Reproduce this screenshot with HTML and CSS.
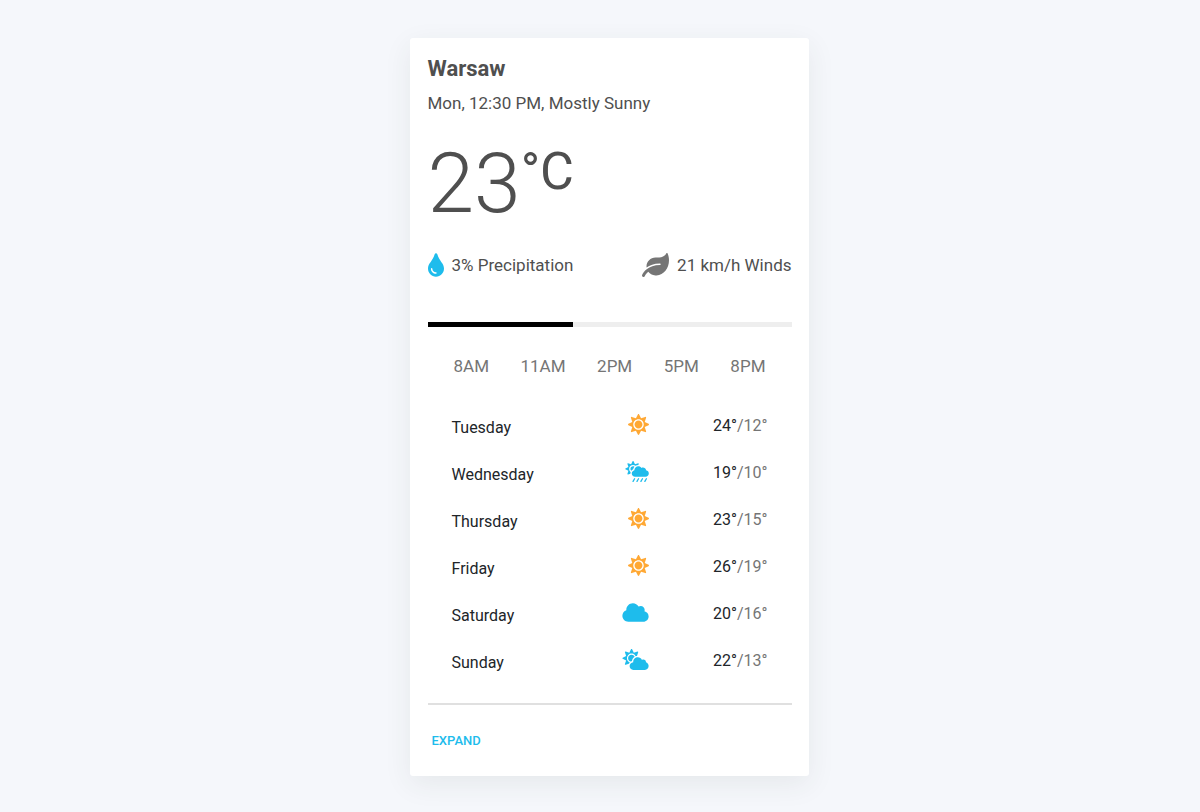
FILE: index.html
```html
<!DOCTYPE html>
<html lang="en">
<head>
<meta charset="utf-8">
<meta name="viewport" content="width=device-width, initial-scale=1">
<title>Warsaw weather</title>
<link rel="stylesheet" href="styles.css">
</head>
<body>
<svg class="sprite" aria-hidden="true">
  <symbol id="drop" viewBox="0 0 352 512"><path d="M205.22 22.09c-7.94-28.78-49.44-30.12-58.44 0C100.01 179.85 0 222.72 0 333.91 0 432.35 78.72 512 176 512s176-79.65 176-178.09c0-111.75-99.79-153.34-146.78-311.82zM176 448c-61.75 0-112-50.25-112-112 0-8.84 7.16-16 16-16s16 7.16 16 16c0 44.11 35.89 80 80 80 8.84 0 16 7.16 16 16s-7.16 16-16 16z"/></symbol>
  <symbol id="leaf" viewBox="0 0 576 512"><path d="M546.2 9.7c-5.6-12.5-21.6-13-28.3-1.2C486.9 62.4 431.4 96 368 96h-80C182 96 96 182 96 288c0 7 .8 13.7 1.5 20.5C161.3 262.8 253.4 224 384 224c8.8 0 16 7.2 16 16s-7.2 16-16 16C132.6 256 26 410.1 2.4 468c-6.6 16.3 1.2 34.9 17.5 41.6 16.4 6.8 35-1.1 41.8-17.3 1.5-3.6 20.9-47.9 71.9-90.6 32.4 43.9 94 85.8 174.9 77.2C465.5 467.5 576 326.7 576 154.3c0-50.2-10.8-102.2-29.8-144.6z"/></symbol>
  <symbol id="sun" viewBox="0 0 512 512"><path d="M256 160c-52.9 0-96 43.1-96 96s43.1 96 96 96 96-43.1 96-96-43.1-96-96-96zm246.4 80.5l-94.7-47.3 33.5-100.4c4.5-13.6-8.4-26.5-21.9-21.9l-100.4 33.5-47.4-94.8c-6.4-12.8-24.6-12.8-31 0l-47.3 94.7L92.7 70.8c-13.6-4.5-26.5 8.4-21.9 21.9l33.5 100.4-94.7 47.4c-12.8 6.4-12.8 24.6 0 31l94.7 47.3-33.5 100.5c-4.5 13.6 8.4 26.5 21.9 21.9l100.4-33.5 47.3 94.7c6.4 12.8 24.6 12.8 31 0l47.3-94.7 100.4 33.5c13.6 4.5 26.5-8.4 21.9-21.9l-33.5-100.4 94.7-47.3c13-6.5 13-24.7.2-31.1zm-155.9 106c-49.9 49.9-131.1 49.9-181 0-49.9-49.9-49.9-131.1 0-181 49.9-49.9 131.1-49.9 181 0 49.9 49.9 49.9 131.1 0 181z"/></symbol>
  <symbol id="cloud" viewBox="0 0 640 512"><path d="M537.6 226.6c4.1-10.7 6.4-22.4 6.4-34.6 0-53-43-96-96-96-19.7 0-38.1 6-53.3 16.2C367 64.2 315.3 32 256 32c-88.4 0-160 71.6-160 160 0 2.7.1 5.4.2 8.1C40.2 219.8 0 273.2 0 336c0 79.5 64.5 144 144 144h368c70.7 0 128-57.3 128-128 0-61.9-44-113.6-102.4-125.4z"/></symbol>
  <symbol id="cloud-sun" viewBox="0 0 640 512"><path d="M575.2 325.7c.2-1.9.8-3.7.8-5.6 0-35.3-28.7-64-64-64-12.6 0-24.2 3.8-34.1 10-17.6-38.8-56.5-66-101.9-66-61.8 0-112 50.1-112 112 0 3 .7 5.8.9 8.7-49.6 3.7-88.9 44.7-88.9 95.3 0 53 43 96 96 96h272c53 0 96-43 96-96 0-42.1-27.2-77.4-64.8-90.4zm-430.4-22.6c-43.7-43.7-43.7-114.7 0-158.3 43.7-43.7 114.7-43.7 158.4 0 9.7 9.7 16.9 20.9 22.3 32.7 9.8-3.7 20.1-6 30.7-7.5L386 81.1c4-11.9-7.3-23.1-19.2-19.2L279 91.2 237.5 8.4C232-2.8 216-2.8 210.4 8.4L169 91.2 81.1 61.9C69.3 58 58 69.3 61.9 81.1l29.3 87.8-82.8 41.5c-11.2 5.6-11.2 21.5 0 27.1l82.8 41.4-29.3 87.8c-4 11.9 7.3 23.1 19.2 19.2l76.1-25.3c6.1-12.4 14-23.7 23.6-33.5-13.1-5.4-25.4-13.4-36-24zm-4.8-79.2c0 40.8 29.3 74.8 67.9 82.3 8-4.7 16.3-8.8 25.2-11.7 5.4-44.3 31-82.5 67.4-105C287.3 160.4 258 140 224 140c-46.3 0-84 37.6-84 83.9z"/></symbol>
  <symbol id="cloud-rain" viewBox="0 0 576 512"><path d="M510.5 225.5c-6.9-37.2-39.3-65.5-78.5-65.5-12.3 0-23.9 3-34.3 8-17.4-24.1-45.6-40-77.7-40-53 0-96 43-96 96 0 .5.2 1.1.2 1.6C187.6 233 160 265.2 160 304c0 44.2 35.8 80 80 80h256c44.2 0 80-35.8 80-80 0-39.2-28.2-71.7-65.5-78.5zm-386.4 34.4c-37.4-37.4-37.4-98.3 0-135.8 34.6-34.6 89.1-36.8 126.7-7.4 20-12.9 43.6-20.7 69.2-20.7.7 0 1.3.2 2 .2l8.9-26.7c3.4-10.2-6.3-19.8-16.5-16.4l-75.3 25.1-35.5-71c-4.8-9.6-18.5-9.6-23.3 0l-35.5 71-75.3-25.1c-10.2-3.4-19.8 6.3-16.4 16.5l25.1 75.3-71 35.5c-9.6 4.8-9.6 18.5 0 23.3l71 35.5-25.1 75.3c-3.4 10.2 6.3 19.8 16.5 16.5l59.2-19.7c-.2-2.4-.7-4.7-.7-7.2 0-12.5 2.3-24.5 6.2-35.9-3.6-2.7-7.1-5.2-10.2-8.3zm69.8-58c4.3-24.5 15.8-46.4 31.9-64-9.8-6.2-21.4-9.9-33.8-9.9-35.3 0-64 28.7-64 64 0 18.7 8.2 35.4 21.1 47.1 11.3-15.9 26.6-28.9 44.8-37.2z"/><path class="rain" d="M517 432l-37 64M421 432l-37 64M325 432l-37 64M229 432l-37 64"/></symbol>
</svg>
<main class="card">
  <h1 class="city">Warsaw</h1>
  <p class="summary">Mon, 12:30 PM, Mostly Sunny</p>
  <p class="temperature">23<span class="unit">°C</span></p>
  <div class="conditions">
    <p class="condition"><svg class="drop-icon" aria-hidden="true"><use href="#drop"/></svg>3% Precipitation</p>
    <p class="condition"><svg class="leaf-icon" aria-hidden="true"><use href="#leaf"/></svg>21 km/h Winds</p>
  </div>
  <progress class="day-progress" value="40" max="100" aria-label="Time of day"></progress>
  <ul class="hours">
    <li>8AM</li><li>11AM</li><li>2PM</li><li>5PM</li><li>8PM</li>
  </ul>
  <table class="forecast">
    <tbody>
      <tr><th scope="row">Tuesday</th><td class="sky"><svg class="icon sunny" role="img" aria-label="Sunny"><use href="#sun"/></svg></td><td class="range">24°<span class="low">/12°</span></td></tr>
      <tr><th scope="row">Wednesday</th><td class="sky"><svg class="icon rainy" role="img" aria-label="Rain"><use href="#cloud-rain"/></svg></td><td class="range">19°<span class="low">/10°</span></td></tr>
      <tr><th scope="row">Thursday</th><td class="sky"><svg class="icon sunny" role="img" aria-label="Sunny"><use href="#sun"/></svg></td><td class="range">23°<span class="low">/15°</span></td></tr>
      <tr><th scope="row">Friday</th><td class="sky"><svg class="icon sunny" role="img" aria-label="Sunny"><use href="#sun"/></svg></td><td class="range">26°<span class="low">/19°</span></td></tr>
      <tr><th scope="row">Saturday</th><td class="sky"><svg class="icon cloudy" role="img" aria-label="Cloudy"><use href="#cloud"/></svg></td><td class="range">20°<span class="low">/16°</span></td></tr>
      <tr><th scope="row">Sunday</th><td class="sky"><svg class="icon cloudy" role="img" aria-label="Partly cloudy"><use href="#cloud-sun"/></svg></td><td class="range">22°<span class="low">/13°</span></td></tr>
    </tbody>
  </table>
  <div class="actions"><button class="expand" type="button">EXPAND</button></div>
</main>
</body>
</html>
```
FILE: styles.css
```css
* {
  box-sizing: border-box;
}

body {
  margin: 0;
  padding: 38px 18px 36px 36px;
  background: #f5f7fb;
  color: #4f4f4f;
  font: 400 17px/24px Roboto, sans-serif;
}

h1, p, ul {
  margin: 0;
  padding: 0;
}

.sprite {
  position: absolute;
  width: 0;
  height: 0;
}

.card {
  max-width: 399px;
  margin: 0 auto;
  padding: 18px 17px 23px 18px;
  border-radius: 3px;
  background: #fff;
  box-shadow: 0 8px 28px rgba(50, 60, 50, 0.08);
}

.city {
  font-size: 22px;
  line-height: 26px;
  font-weight: 700;
}

.summary {
  margin-top: 9px;
}

.temperature {
  display: flex;
  align-items: flex-start;
  margin-top: 17px;
  font-size: 84px;
  line-height: 104px;
  font-weight: 300;
}

.unit {
  font-size: 52px;
  line-height: 80px;
  font-weight: 400;
}

.conditions {
  display: flex;
  justify-content: space-between;
  margin-top: 17px;
}

.condition {
  display: flex;
  align-items: center;
  gap: 8px;
}

.drop-icon {
  width: 16px;
  height: 24px;
  fill: #1ebcec;
}

.leaf-icon {
  width: 27px;
  height: 24px;
  fill: #757575;
}

.day-progress {
  display: block;
  width: 100%;
  height: 5px;
  margin-top: 45px;
  border: 0;
  background: #eee;
  appearance: none;
}

.day-progress::-webkit-progress-bar {
  background: #eee;
}

.day-progress::-webkit-progress-value {
  background: #000;
}

.hours {
  display: flex;
  justify-content: space-between;
  margin-top: 27px;
  padding: 0 26px;
  color: #757575;
  list-style: none;
}

.forecast {
  width: 100%;
  margin-top: 24px;
  border-collapse: collapse;
  table-layout: fixed;
  color: #212529;
  font-size: 16px;
  line-height: 22px;
}

.forecast th,
.forecast td {
  height: 47px;
  padding: 0;
  vertical-align: top;
}

.forecast th {
  width: 35%;
  padding: 15px 0 0 24px;
  font-weight: 400;
  text-align: left;
}

.forecast .sky {
  padding-top: 12px;
  text-align: right;
}

.forecast .range {
  width: 39%;
  padding: 13px 24px 0 0;
  text-align: right;
}

.low {
  color: #757575;
}

.icon {
  display: block;
  height: 21px;
  margin-right: 1px;
  margin-left: auto;
  fill: #1ebcec;
}

.sunny {
  width: 21px;
  fill: #ffa834;
}

.rainy {
  width: 24px;
}

.cloudy {
  width: 27px;
}

.rain {
  fill: none;
  stroke: #1ebcec;
  stroke-width: 32px;
  stroke-linecap: round;
}

.actions {
  margin-top: 19px;
  padding-top: 22px;
  border-top: 2px solid #e0e0e0;
}

.expand {
  padding: 0 4px;
  border: 0;
  background: none;
  color: #1ebcec;
  font: 500 13px/24px Roboto, sans-serif;
  cursor: pointer;
}
```
